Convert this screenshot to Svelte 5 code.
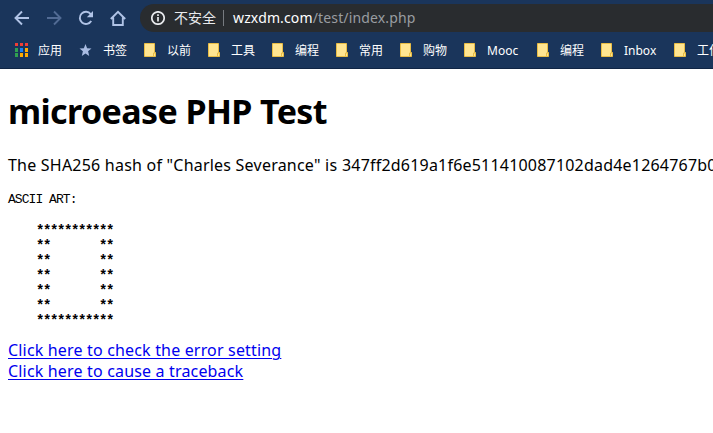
<script>
  const bookmarks = [
    { name: '以前' }, { name: '工具' }, { name: '编程' }, { name: '常用' }, { name: '购物' },
    { name: 'Mooc', latin: true }, { name: '编程' }, { name: 'Inbox', latin: true }, { name: '工作' }
  ];
  const appColors = ['#f03e36', '#f03e36', '#f03e36', '#30a150', '#1a82f5', '#ffab00', '#30a150', '#ffab00', '#ffab00'];
  const edge = '***********';
  const side = '**       **';
  const art = [edge, side, side, side, side, side, edge].map((row) => '    ' + row).join('\n');
</script>

<div class="window">
  <header>
    <nav class="toolbar">
      <svg class="nav" width="16" height="16" viewBox="0 0 16 16"><path d="M15 8H2M8 1.5 1.5 8 8 14.5" /></svg>
      <svg class="nav dim" width="16" height="16" viewBox="0 0 16 16"><path d="M1 8h13M8 1.5 14.500 8 8 14.500" /></svg>
      <svg class="nav" width="16" height="16" viewBox="0 0 16 16"><path d="M13.200 11A6.100 6.100 0 1 1 12.700 4.100L14 5.500" /><path class="solid" d="M15 1v6.200H8.800z" /></svg>
      <svg class="nav" width="16" height="16" viewBox="0 0 16 16"><path d="M.800 9 8 1.800 15.200 9M3.200 7.500V15h9.600V7.500" /></svg>
      <div class="omnibox">
        <svg class="info" width="14" height="14" viewBox="0 0 14 14"><circle cx="7" cy="7" r="6.200" /><path d="M7 6v4.500M7 3.200v1.700" /></svg>
        <span class="warning">不安全</span>
        <i></i>
        <span class="url"><b>wzxdm.com</b>/test/index.php</span>
      </div>
    </nav>
    <div class="bookmarks">
      <div class="item first">
        <svg width="13" height="14" viewBox="0 0 13 14">
          {#each appColors as color, n}
            <rect x={(n % 3) * 5} y={Math.floor(n / 3) * 5} width="3" height={n < 3 ? 3 : 4} fill={color} />
          {/each}
        </svg>
        <span>应用</span>
      </div>
      <div class="item star">
        <svg width="13" height="12" viewBox="0 0 12 12"><path fill="#a9bce2" d="m6 0 1.600 4.200 4.400.3-3.400 2.800L9.700 12 6 9.400 2.300 12l1.100-4.700L0 4.500l4.400-.3z" /></svg>
        <span>书签</span>
      </div>
      {#each bookmarks as bookmark}
        <div class="item">
          <svg width="12" height="14" viewBox="0 0 12 14"><path fill="#ffe591" stroke="#e9bd45" d="M.5.500h10v9h1v4H.500z" /><path fill="none" stroke="#e9bd45" d="M9.500 13.500V10h2" /></svg>
          <span class:latin={bookmark.latin}>{bookmark.name}</span>
        </div>
      {/each}
    </div>
  </header>
  <main>
    <h1>microease PHP Test</h1>
    <p class="hash"><span class="lead">The SHA256 hash of "Charles Severance" is </span><span class="digest">347ff2d619a1f6e511410087102dad4e1264767b0</span></p>
    <pre class="caption">ASCII ART:</pre>
    <pre class="art">{art}</pre>
    <div class="links">
      <a class="check" href="#check">Click here to check the error setting</a>
      <a class="trace" href="#trace">Click here to cause a traceback</a>
    </div>
  </main>
</div>

<style>
  .window { width: 713px; height: 433px; overflow: hidden; background: #fff; font-family: "Noto Sans", "Noto Sans CJK SC", sans-serif; color: #000; }
  header { height: 69px; box-sizing: border-box; background: #1a355b; border-bottom: 1px solid #102544; overflow: hidden; }
  .toolbar { display: flex; align-items: center; height: 28px; padding: 4px 0 0 14px; gap: 16px; }
  .nav { flex: none; fill: none; stroke: #b0c3e6; stroke-width: 1.9; }
  .nav .solid { fill: #b0c3e6; stroke: none; }
  .dim { stroke: #526b94; }
  .omnibox { display: flex; align-items: center; flex: none; width: 600px; height: 28px; box-sizing: border-box; margin-left: -2px; padding-left: 11px; border-radius: 14px 0 0 14px; background: #292c2f; white-space: nowrap; }
  .info { fill: none; stroke: #e8eaed; stroke-width: 1.700; }
  .warning { width: 42px; margin-left: 9px; font: 14px/26px "Noto Sans CJK SC", sans-serif; padding-bottom: 2px; color: #e8eaed; }
  .omnibox i { width: 1px; height: 16px; margin: 0 9px 0 7px; background: #777b80; }
  .url { font-size: 14px; line-height: 28px; letter-spacing: .14px; color: #999da1; }
  .url b { font-weight: 400; color: #fff; }
  .bookmarks { display: flex; height: 36px; }
  .item { display: flex; flex: none; align-items: center; height: 36px; margin-right: 17px; color: #fff; font: 12px/36px "Noto Sans CJK SC", sans-serif; }
  .item svg { flex: none; }
  .item span { width: 24px; margin-left: 11px; white-space: nowrap; }
  .item .latin { width: 33px; padding-top: 2px; line-height: 34px; font-family: "Noto Sans", sans-serif; }
  .first { margin-left: 15px; margin-right: 17px; }
  .first span { margin-left: 10px; }
  main { padding: 0 8px; }
  h1 { margin: 21px 0 0; font-size: 34px; line-height: 43px; font-weight: 700; white-space: nowrap; letter-spacing: -.61px; }
  .hash { display: flex; margin: 21px 0 0; font-size: 16px; line-height: 22px; white-space: nowrap; }
  .lead { flex: none; width: 334px; white-space: pre; letter-spacing: .22px; }
  .digest { letter-spacing: .2px; }
  pre { margin: 0; font-family: "Liberation Mono", monospace; font-size: 13px; line-height: 15px; letter-spacing: -.8px; }
  .caption { margin-top: 16px; letter-spacing: -.95px; }
  .art { margin-top: 17px; font-size: 14px; letter-spacing: -1.4px; font-weight: 700; }
  .links { display: flex; flex-direction: column; align-items: flex-start; margin-top: 11px; font-size: 16px; line-height: 21px; letter-spacing: .17px; }
  a { color: #0000ee; white-space: nowrap; text-underline-offset: 2px; text-decoration-thickness: 1px; }
</style>
